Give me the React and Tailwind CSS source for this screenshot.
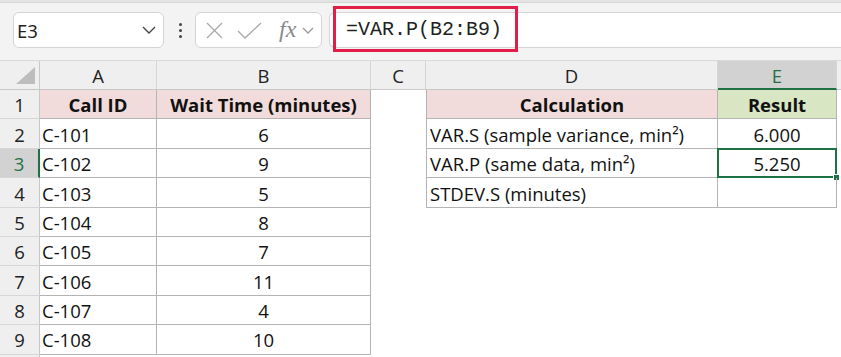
import React from "react";

const CELL_FONT = { fontFamily: "'Open Sans', Lato, sans-serif" };

const rows = [
  { a: "C-101", b: "6", d: "VAR.S (sample variance, min²)", e: "6.000" },
  { a: "C-102", b: "9", d: "VAR.P (same data, min²)", e: "5.250" },
  { a: "C-103", b: "5", d: "STDEV.S (minutes)", e: "" },
  { a: "C-104", b: "8" },
  { a: "C-105", b: "7" },
  { a: "C-106", b: "11" },
  { a: "C-107", b: "4" },
  { a: "C-108", b: "10" },
];

function Chevron({ className }) {
  return (
    <svg className={className} width="14" height="8" viewBox="0 0 14 8" fill="none">
      <polyline points="1,1 7,7 13,1" stroke="#444" strokeWidth="1.4" />
    </svg>
  );
}

function FormulaBar() {
  return (
    <div className="relative h-[61px] bg-[#f3f3f3] border-b border-[#d9d9d9]">
      <div className="h-[3px] bg-[#e4e4e4] border-b border-[#d6d6d6]" />
      <div className="flex items-start pl-[13px] pt-[9px]">
        {/* name box */}
        <div className="w-[151px] h-[36px] rounded-[6px] border border-[#d4d4d4] bg-white flex items-center justify-between pl-[3px] pr-[7px]">
          <span className="text-[18.5px] text-[#222] pt-[1px]" style={{ fontFamily: "'Noto Sans', sans-serif" }}>E3</span>
          <Chevron />
        </div>
        {/* dots */}
        <div className="ml-[15px] h-[36px] flex flex-col justify-center gap-[3px]">
          <span className="w-[3px] h-[3px] rounded-full bg-[#444]" />
          <span className="w-[3px] h-[3px] rounded-full bg-[#444]" />
          <span className="w-[3px] h-[3px] rounded-full bg-[#444]" />
        </div>
        {/* cancel / enter / fx */}
        <div className="ml-[13px] w-[127px] h-[36px] rounded-[6px] border border-[#d4d4d4] bg-white flex items-center pl-[10px]">
          <svg width="17" height="17" viewBox="0 0 17 17">
            <line x1="1" y1="1" x2="16" y2="16" stroke="#a8a8a8" strokeWidth="1.3" />
            <line x1="16" y1="1" x2="1" y2="16" stroke="#a8a8a8" strokeWidth="1.3" />
          </svg>
          <svg className="ml-[14px]" width="25" height="17" viewBox="0 0 25 17">
            <polyline points="1,9 8,16 24,1" fill="none" stroke="#a8a8a8" strokeWidth="1.3" />
          </svg>
          <span className="ml-[17px] text-[24px] italic text-[#8a8a8a] leading-none -mt-[2px]" style={{ fontFamily: "'Liberation Serif', serif" }}>fx</span>
          <svg className="ml-[6px]" width="12" height="7" viewBox="0 0 12 7" fill="none">
            <polyline points="1,1 6,6 11,1" stroke="#999" strokeWidth="1.3" />
          </svg>
        </div>
        {/* formula input */}
        <div className="ml-[7px] flex-1 h-[36px] bg-white border-y border-l border-[#d4d4d4] rounded-l-[6px] flex items-center pl-[16px]">
          <span className="text-[20px] text-[#222]" style={{ fontFamily: "'Liberation Mono', monospace" }}>=VAR.P(B2:B9)</span>
        </div>
      </div>
      {/* highlight annotation */}
      <div className="absolute left-[333px] top-[6px] w-[185px] h-[46px] border-[3px] border-[#e11d48]" />
    </div>
  );
}

const cols = "grid grid-cols-[40px_117px_214px_55px_292px_119px_4px]";
const rowH = "h-[29.4px]";
const tb = "border-[#b4b4b4]";
const txt = "text-[18.5px] text-[#111] pt-[2px]";

function ColHeader({ label, active }) {
  return (
    <div
      className={`h-[29px] flex items-center justify-center text-[18.5px] pt-[2px] border-r border-[#d6d6d6] ${
        active ? "bg-[#d2d2d2] text-[#1e7145] border-b-2 border-b-[#1e7145]" : "bg-[#efefef] text-[#222] border-b border-b-[#c8c8c8]"
      }`}
    >
      {label}
    </div>
  );
}

function RowHeader({ n, active }) {
  return (
    <div
      className={`${rowH} flex items-center justify-center text-[18.5px] pt-[2px] border-b border-[#d6d6d6] ${
        active ? "bg-[#d2d2d2] text-[#1e7145] border-r-2 border-r-[#1e7145]" : "bg-[#efefef] text-[#222] border-r border-r-[#c8c8c8]"
      }`}
    >
      {n}
    </div>
  );
}

export default function App() {
  return (
    <div className="w-[841px] h-[357px] bg-white overflow-hidden" style={CELL_FONT}>
      <FormulaBar />

      <div className={cols}>
        {/* column headers */}
        <div className="h-[29px] bg-[#efefef] border-r border-b border-[#c8c8c8] flex items-end justify-end pr-[4px] pb-[5px]">
          <svg width="19" height="17" viewBox="0 0 19 17">
            <polygon points="0,17 19,0 19,17" fill="#bdbdbd" />
          </svg>
        </div>
        <ColHeader label="A" />
        <ColHeader label="B" />
        <ColHeader label="C" />
        <ColHeader label="D" />
        <ColHeader label="E" active />
        <div className="h-[29px] bg-[#efefef] border-b border-[#c8c8c8]" />

        {/* row 1 */}
        <RowHeader n={1} />
        <div className={`${rowH} bg-[#f2dcdb] border-r border-b ${tb} flex items-center justify-center ${txt} font-bold`}>Call ID</div>
        <div className={`${rowH} bg-[#f2dcdb] border-r border-b ${tb} flex items-center justify-center ${txt} font-bold`}>Wait Time (minutes)</div>
        <div className={rowH} />
        <div className={`${rowH} bg-[#f2dcdb] border-l border-r border-b ${tb} flex items-center justify-center ${txt} font-bold`}>Calculation</div>
        <div className={`${rowH} bg-[#d9e6c3] border-r border-b ${tb} flex items-center justify-center ${txt} font-bold`}>Result</div>
        <div className={rowH} />

        {rows.map((r, i) => {
          const n = i + 2;
          const hasD = r.d !== undefined;
          const selected = n === 3;
          return (
            <React.Fragment key={n}>
              <RowHeader n={n} active={selected} />
              <div className={`${rowH} border-r border-b ${tb} flex items-center pl-[2px] ${txt}`}>{r.a}</div>
              <div className={`${rowH} border-r border-b ${tb} flex items-center justify-center ${txt}`}>{r.b}</div>
              <div className={rowH} />
              {hasD ? (
                <>
                  <div className={`${rowH} border-l border-r border-b ${tb} flex items-center pl-[3px] ${txt}`}>{r.d}</div>
                  <div className={`${rowH} relative border-r border-b ${tb} flex items-center justify-center ${txt}`}>
                    {r.e}
                    {selected && (
                      <>
                        <div className="absolute -left-[1px] -top-[1px] -right-[1px] -bottom-[1px] border-2 border-[#1e7145]" />
                        <div className="absolute -right-[4px] -bottom-[4px] w-[7px] h-[7px] bg-[#1e7145] border border-white" />
                      </>
                    )}
                  </div>
                </>
              ) : (
                <>
                  <div className={rowH} />
                  <div className={rowH} />
                </>
              )}
              <div className={rowH} />
            </React.Fragment>
          );
        })}
        <div className={`${rowH} bg-[#efefef] border-r border-[#c8c8c8]`} />
      </div>
    </div>
  );
}
